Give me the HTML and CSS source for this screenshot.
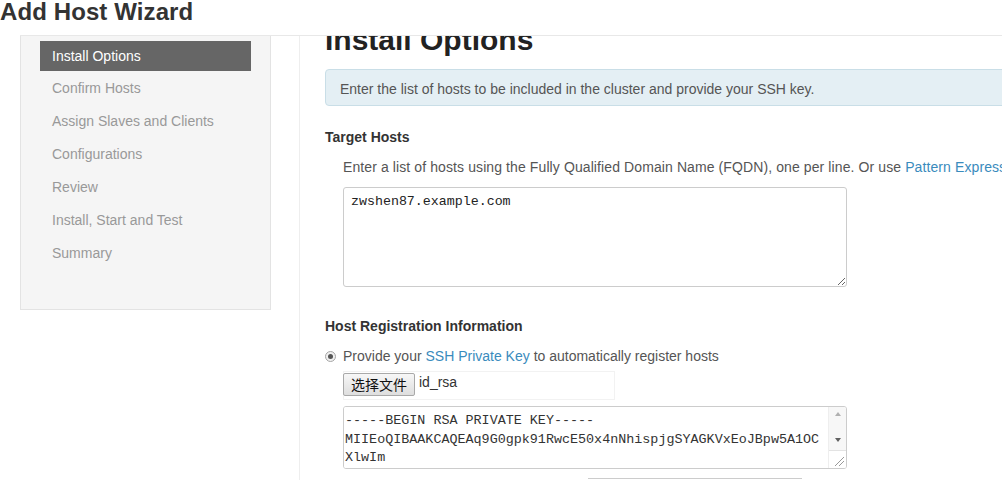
FILE: index.html
```html
<!DOCTYPE html>
<html lang="en">
<head>
<meta charset="utf-8">
<title>Add Host Wizard</title>
<link rel="stylesheet" href="styles.css">
</head>
<body>
<h1 class="page-title">Add Host Wizard</h1>
<div class="wizard">
  <aside class="steps">
    <ul class="step-list">
      <li class="step active">Install Options</li>
      <li class="step">Confirm Hosts</li>
      <li class="step">Assign Slaves and Clients</li>
      <li class="step">Configurations</li>
      <li class="step">Review</li>
      <li class="step">Install, Start and Test</li>
      <li class="step">Summary</li>
    </ul>
  </aside>
  <main class="content">
    <h2 class="section-title">Install Options</h2>
    <div class="alert">Enter the list of hosts to be included in the cluster and provide your SSH key.</div>

    <h3 class="label">Target Hosts</h3>
    <p class="hint">Enter a list of hosts using the Fully Qualified Domain Name (FQDN), one per line. Or use <a class="link" href="#">Pattern Expressions</a></p>
    <textarea class="hosts">zwshen87.example.com</textarea>

    <h3 class="label label-reg">Host Registration Information</h3>
    <div class="radio-row">
      <span class="radio"><span class="radio-dot"></span></span>
      <span>Provide your <a class="link" href="#">SSH Private Key</a> to automatically register hosts</span>
    </div>
    <div class="file-box">
      <span class="file-btn">选择文件</span>
      <span class="file-name">id_rsa</span>
    </div>
    <div class="keybox">
      <textarea class="key">-----BEGIN RSA PRIVATE KEY-----
MIIEoQIBAAKCAQEAq9G0gpk91RwcE50x4nNhispjgSYAGKVxEoJBpw5A1OC
XlwIm</textarea>
      <div class="scrollbar">
        <span class="arrow arrow-up"></span>
        <span class="track"></span>
        <span class="arrow arrow-down"></span>
        <span class="grip">
          <svg width="17" height="17" viewBox="0 0 17 17"><path d="M6 15 L15 6 M10 15 L15 10" stroke="#999" stroke-width="1"/></svg>
        </span>
      </div>
    </div>
    <div class="next-field"></div>
  </main>
</div>
</body>
</html>
```

FILE: styles.css
```css
html, body {
  margin: 0;
  padding: 0;
  background: #fff;
  height: 480px;
  overflow: hidden;
}
body {
  font-family: "Liberation Sans", Arial, sans-serif;
  font-size: 14px;
  color: #555;
}
.page-title {
  margin: 0;
  height: 35px;
  font-size: 24px;
  line-height: 24px;
  font-weight: bold;
  color: #333;
  letter-spacing: 0.1px;
}
.wizard {
  margin-left: 20px;
  border-top: 1px solid #e8e8e8;
  display: flex;
  align-items: flex-start;
  height: 444px;
  overflow: hidden;
}
.steps {
  flex: none;
  box-sizing: border-box;
  width: 251px;
  height: 274px;
  background: #f5f5f5;
  border: 1px solid #e3e3e3;
  border-top: none;
  padding: 5px 19px 0;
}
.step-list {
  list-style: none;
  margin: 0;
  padding: 0;
}
.step {
  height: 33px;
  line-height: 35px;
  padding-left: 12px;
  color: #999;
}
.step.active {
  height: 30px;
  line-height: 30px;
  background: #666;
  color: #fff;
}
.content {
  flex: none;
  width: 900px;
  margin-left: 28px;
  border-left: 1px solid #eee;
  padding-left: 25px;
  align-self: stretch;
}
.section-title {
  margin: -16px 0 9px;
  font-size: 30px;
  line-height: 40px;
  font-weight: bold;
  color: #222;
}
.alert {
  box-sizing: border-box;
  height: 37px;
  padding: 2px 14px 0;
  line-height: 35px;
  background: #e4eff4;
  border: 1px solid #c9dee7;
  border-radius: 4px;
  color: #555;
  white-space: nowrap;
}
.label {
  margin: 21px 0 0;
  font-size: 14px;
  line-height: 20px;
  font-weight: bold;
  color: #333;
}
.label-reg {
  margin-top: 29px;
}
.hint {
  margin: 10px 0 0 18px;
  line-height: 20px;
  white-space: nowrap;
  letter-spacing: 0.1px;
}
.link {
  color: #3a8bbd;
  text-decoration: none;
}
.hosts {
  display: block;
  box-sizing: border-box;
  margin: 10px 0 0 18px;
  width: 504px;
  height: 100px;
  padding: 5px 7px;
  border: 1px solid #ccc;
  border-radius: 3px;
  font-family: "Liberation Mono", "Courier New", monospace;
  font-size: 13.3px;
  line-height: 18px;
  color: #222;
  resize: vertical;
  outline: none;
}
.radio-row {
  margin-top: 10px;
  display: flex;
  align-items: center;
  gap: 7px;
  height: 20px;
  line-height: 22px;
}
.radio {
  box-sizing: border-box;
  width: 11px;
  height: 11px;
  border: 1px solid #a6a6a6;
  border-radius: 50%;
  background: #f0f0f0;
  display: flex;
  align-items: center;
  justify-content: center;
}
.radio-dot {
  width: 5px;
  height: 5px;
  border-radius: 50%;
  background: #555;
}
.file-box {
  box-sizing: border-box;
  margin: 5px 0 0 18px;
  width: 272px;
  height: 29px;
  border: 1px solid #f2f2f2;
  display: flex;
  align-items: flex-start;
  padding-top: 1px;
  gap: 4px;
}
.file-btn {
  box-sizing: border-box;
  width: 72px;
  height: 23px;
  margin-left: -1px;
  border: 1px solid #a9a9a9;
  border-radius: 2px;
  background: linear-gradient(#f7f7f7, #dedede);
  font-family: "Noto Sans CJK SC", sans-serif;
  font-size: 14px;
  line-height: 21px;
  text-align: center;
  color: #111;
}
.file-name {
  line-height: 18px;
  color: #333;
}
.keybox {
  box-sizing: border-box;
  margin: 6px 0 0 18px;
  width: 504px;
  height: 63px;
  border: 1px solid #ccc;
  border-radius: 3px;
  display: flex;
  overflow: hidden;
}
.key {
  flex: 1;
  border: none;
  margin: 0;
  padding: 5px 1px 0;
  font-family: "Liberation Mono", "Courier New", monospace;
  font-size: 13.4px;
  line-height: 18.5px;
  color: #333;
  resize: none;
  overflow: hidden;
  outline: none;
  white-space: pre;
}
.scrollbar {
  flex: none;
  width: 17px;
  display: flex;
  flex-direction: column;
  align-items: center;
  background: #f7f7f7;
  border-left: 1px solid #eee;
}
.arrow {
  width: 0;
  height: 0;
  border-left: 3.5px solid transparent;
  border-right: 3.5px solid transparent;
}
.arrow-up {
  margin-top: 5px;
  border-bottom: 4px solid #b0b0b0;
}
.track {
  flex: 1;
}
.arrow-down {
  margin-bottom: 8px;
  border-top: 4px solid #606060;
}
.grip {
  width: 17px;
  height: 17px;
  border-top: 1px solid #e3e3e3;
  background: #fff;
  display: block;
}
.grip svg {
  display: block;
}
.next-field {
  margin: 9px 0 0 263px;
  width: 214px;
  height: 20px;
  border-top: 1px solid #ccc;
}
```
